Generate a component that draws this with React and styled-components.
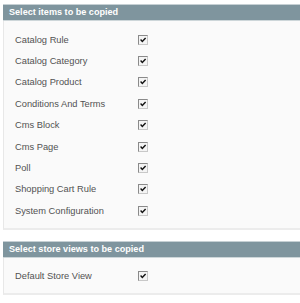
import React from 'react';
import styled, { createGlobalStyle } from 'styled-components';

const GlobalStyle = createGlobalStyle`
	html, body {
		margin: 0;
		background: #fff;
		font-family: "Liberation Sans", Arial, sans-serif;
	}
`;

const Page = styled.div`
	padding: 4px 0 0 3px;
	width: 297px;
	overflow: hidden;
`;

const Section = styled.div`
	margin-bottom: 11px;
`;

const Header = styled.div`
	height: 15px;
	border-top: 1px solid #c6d0d4;
	border-bottom: 1px solid #cdd6d9;
	background: #7f959e;
	color: #fff;
	font-weight: bold;
	font-size: 9.1px;
	line-height: 15px;
	padding-left: 6px;
	width: 400px;
`;

const Box = styled.div`
	background: #fafafa;
	border-left: 1px solid #e8e8e8;
	border-bottom: 2px solid #ececec;
	padding: 8px 0 6px 11px;
	width: 400px;
`;

const Row = styled.div`
	display: grid;
	grid-template-columns: 123px 12px;
	align-items: center;
	height: 21.4px;
	font-size: 9.3px;
	color: #525252;
`;

const Check = styled.span`
	display: block;
	width: 8px;
	height: 8px;
	border: 1px solid #8a8a8a;
	border-right-color: #c8c8c8;
	border-bottom-color: #c8c8c8;
	background: #f4f4f4;
	position: relative;

	svg {
		position: absolute;
		left: 0;
		top: 0;
	}
`;

const CheckBox = () => (
	<Check>
		<svg width="8" height="8" viewBox="0 0 8 8">
			<path d="M1.6 3.6 L3.3 5.4 L6.6 2" fill="none" stroke="#111" strokeWidth="1.4" />
		</svg>
	</Check>
);

const sections = [
	{
		title: 'Select items to be copied',
		items: [
			'Catalog Rule',
			'Catalog Category',
			'Catalog Product',
			'Conditions And Terms',
			'Cms Block',
			'Cms Page',
			'Poll',
			'Shopping Cart Rule',
			'System Configuration',
		],
	},
	{
		title: 'Select store views to be copied',
		items: ['Default Store View'],
	},
];

const App = () => {
	return (
		<Page>
			<GlobalStyle />
			{sections.map((section) => (
				<Section key={section.title}>
					<Header>{section.title}</Header>
					<Box>
						{section.items.map((item) => (
							<Row key={item}>
								<span>{item}</span>
								<CheckBox />
							</Row>
						))}
					</Box>
				</Section>
			))}
		</Page>
	);
}

export default App;
